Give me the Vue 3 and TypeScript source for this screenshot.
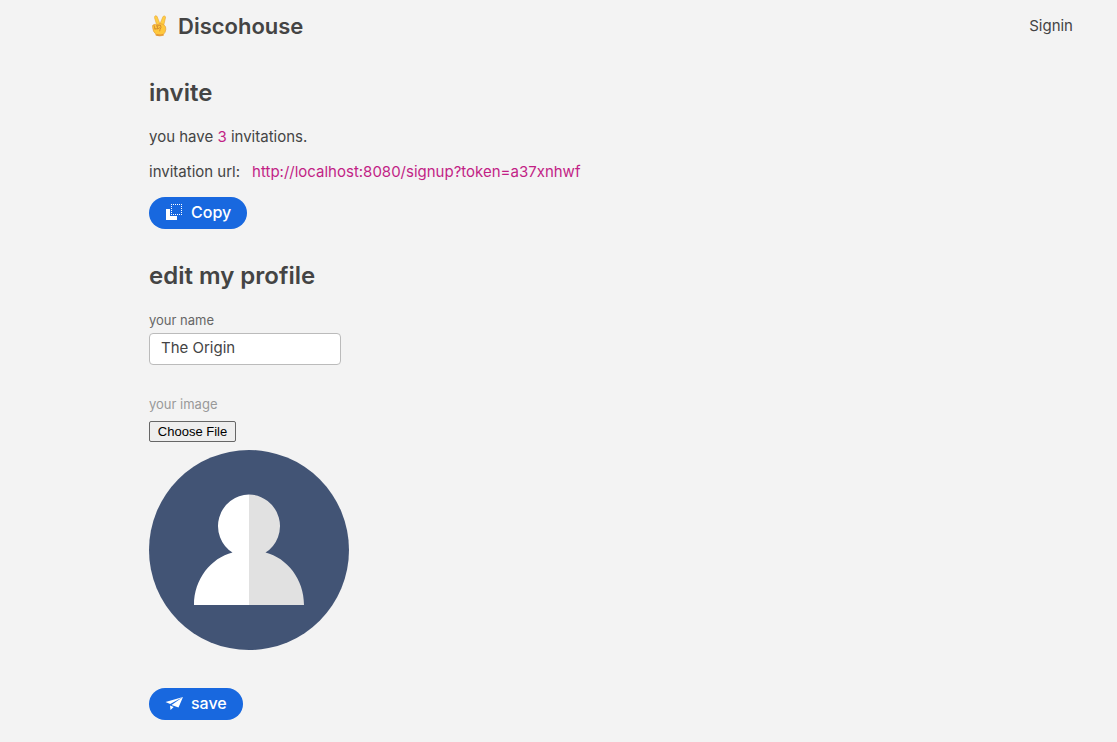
<script setup lang="ts">
import { ref } from 'vue'

const invitations = ref(3)
const inviteUrl = ref('http://localhost:8080/signup?token=a37xnhwf')
const userName = ref('The Origin')

function copyUrl(): void {
  void navigator.clipboard?.writeText(inviteUrl.value)
}
</script>

<template>
  <div class="page">
    <header class="header">
      <h1 class="brand">
        <svg class="brand-icon" viewBox="0 0 18 24" aria-hidden="true">
          <path d="M6 11 L3.6 3 Q3.4 1 4.8 .8 Q6.1 .7 6.6 2.2 L9.6 10 Z" fill="#ffcf43" stroke="#e9a63a" stroke-width=".7" />
          <path d="M9.2 10.5 L12.6 2.2 Q13.2 .7 14.6 1.1 Q16 1.6 15.5 3.2 L13.4 12 Z" fill="#ffcf43" stroke="#e9a63a" stroke-width=".7" />
          <path d="M1.500 13.200 Q.8 11 2.800 10.400 Q4.600 9.800 5.600 10.800 L9.500 9.600 Q12 9.300 14 11 Q16.200 12.400 15.900 15.600 Q15.600 19.200 13.400 21 V22.200 Q9 23.600 5 22 V20.800 Q1.700 18.400 1.500 13.200 Z" fill="#ffc83c" stroke="#e39a35" stroke-width=".7" />
          <path d="M3.100 11.500 L4.100 15.400 M6.100 11.300 L7 14.600 M4 15.200 Q7.600 16 10.200 13.200 Q11.400 11.800 9.600 11 L6.500 12.200 M10.600 13.800 Q9.200 15.200 9.200 17.400" fill="none" stroke="#c5792d" stroke-width=".8" stroke-linecap="round" />
          <path d="M5.600 21.400 Q9 22.600 12.800 21.300" fill="none" stroke="#e09036" stroke-width="1.200" />
        </svg>
        <span>Discohouse</span>
      </h1>
      <a class="signin" href="#signin">Signin</a>
    </header>

    <main>
      <section class="invite">
        <h2>invite</h2>
        <p>you have <span class="accent">{{ invitations }}</span> invitations.</p>
        <p class="url-row">
          <span>invitation url:</span>
          <a class="accent" :href="inviteUrl">{{ inviteUrl }}</a>
        </p>
        <button class="pill" type="button" @click="copyUrl">
          <svg class="pill-icon" viewBox="0 0 18 18" aria-hidden="true" shape-rendering="crispEdges">
            <path d="M1 6h4v7h7v4H1z" fill="#fff" />
            <path d="M6 1.5h11M6 11.5h11" stroke="#fff" stroke-dasharray="1 1" />
            <path d="M6.5 1v11M16.5 1v11" stroke="#fff" stroke-dasharray="1 1" />
          </svg>
          <span>Copy</span>
        </button>
      </section>

      <form class="profile" @submit.prevent>
        <h2>edit my profile</h2>
        <div class="field">
          <label for="user-name">your name</label>
          <input id="user-name" v-model="userName" class="text-box" type="text" />
        </div>
        <div class="field image-field">
          <label class="muted" for="user-image">your image</label>
          <input id="user-image" class="file-box" type="file" accept="image/*" />
          <svg class="avatar" viewBox="0 0 200 200" role="img" aria-label="profile image">
            <circle cx="100" cy="100" r="100" fill="#425475" />
            <path d="M100 44.500A31.500 31.500 0 0 0 83.500 102.500C62 108 45 129 45 155H100Z" fill="#fff" />
            <path d="M100 44.500A31.500 31.500 0 0 1 116.500 102.500C138 108 155 129 155 155H100Z" fill="#e1e1e1" />
          </svg>
        </div>
        <button class="pill" type="submit">
          <svg class="pill-icon" viewBox="0 0 18 18" aria-hidden="true">
            <path d="M.5 8 L18 3 L5.200 10.100Z M18 3 L13.500 13.500 L6.500 11Z M5 11.400 L8.700 12.900 L5.500 16Z" fill="#fff" />
          </svg>
          <span>save</span>
        </button>
      </form>
    </main>
  </div>
</template>

<style>
html {
  background: #f3f3f3;
}
body {
  margin: 0;
}
</style>

<style scoped>
.page {
  box-sizing: border-box;
  min-height: 100vh;
  padding: 0 44px 20px 149px;
  background: #f3f3f3;
  color: #444;
  font-family: Inter, "Liberation Sans", sans-serif;
  font-size: 15px;
  line-height: 20px;
}
.header {
  display: flex;
  align-items: center;
  justify-content: space-between;
  height: 52px;
}
.brand {
  display: flex;
  align-items: center;
  gap: 8px;
  margin: 0;
  font-size: 22px;
  font-weight: 600;
  line-height: 32px;
}
.brand-icon {
  width: 21px;
  height: 22px;
}
.signin {
  color: inherit;
  text-decoration: none;
}
h2 {
  margin: 0;
  font-size: 24px;
  font-weight: 600;
  line-height: 32px;
}
.invite {
  padding-top: 25px;
}
.invite p {
  margin: 0;
}
.invite h2 {
  margin-bottom: 18px;
}
.invite .url-row {
  display: flex;
  gap: 12px;
  margin: 15px 0;
}
.accent {
  color: #c21f86;
  text-decoration: none;
}
.pill {
  box-sizing: border-box;
  display: inline-flex;
  align-items: center;
  gap: 8px;
  height: 32px;
  padding: 0 16px 2px;
  border: 0;
  border-radius: 16px;
  background: #1868df;
  color: #fff;
  font: 500 16px/20px Inter, "Liberation Sans", sans-serif;
  cursor: pointer;
}
.pill-icon {
  width: 18px;
  height: 18px;
}
.profile {
  padding-top: 31px;
}
.profile h2 {
  margin-bottom: 20px;
}
.field {
  display: flex;
  flex-direction: column;
  align-items: flex-start;
}
.field label {
  margin-bottom: 5px;
  color: #666;
  font-size: 13px;
  line-height: 16px;
}
.field .muted {
  margin-bottom: 9px;
  color: #999;
}
.text-box {
  box-sizing: border-box;
  width: 192px;
  height: 32px;
  padding: 0 11px 4px;
  border: 1px solid #bbb;
  border-radius: 4px;
  background: #fff;
  color: #444;
  font: inherit;
}
.image-field {
  margin: 31px 0 38px;
}
.file-box {
  width: 87px;
  height: 21px;
  overflow: hidden;
}
.file-box::file-selector-button {
  box-sizing: border-box;
  width: 87px;
  height: 21px;
  margin: 0;
  padding: 0;
  border: 1px solid #666;
  border-radius: 2px;
  background: #eee;
  color: #000;
  font: 13px/19px "Liberation Sans", Arial, sans-serif;
}
.avatar {
  width: 200px;
  height: 200px;
  margin-top: 8px;
}
</style>
